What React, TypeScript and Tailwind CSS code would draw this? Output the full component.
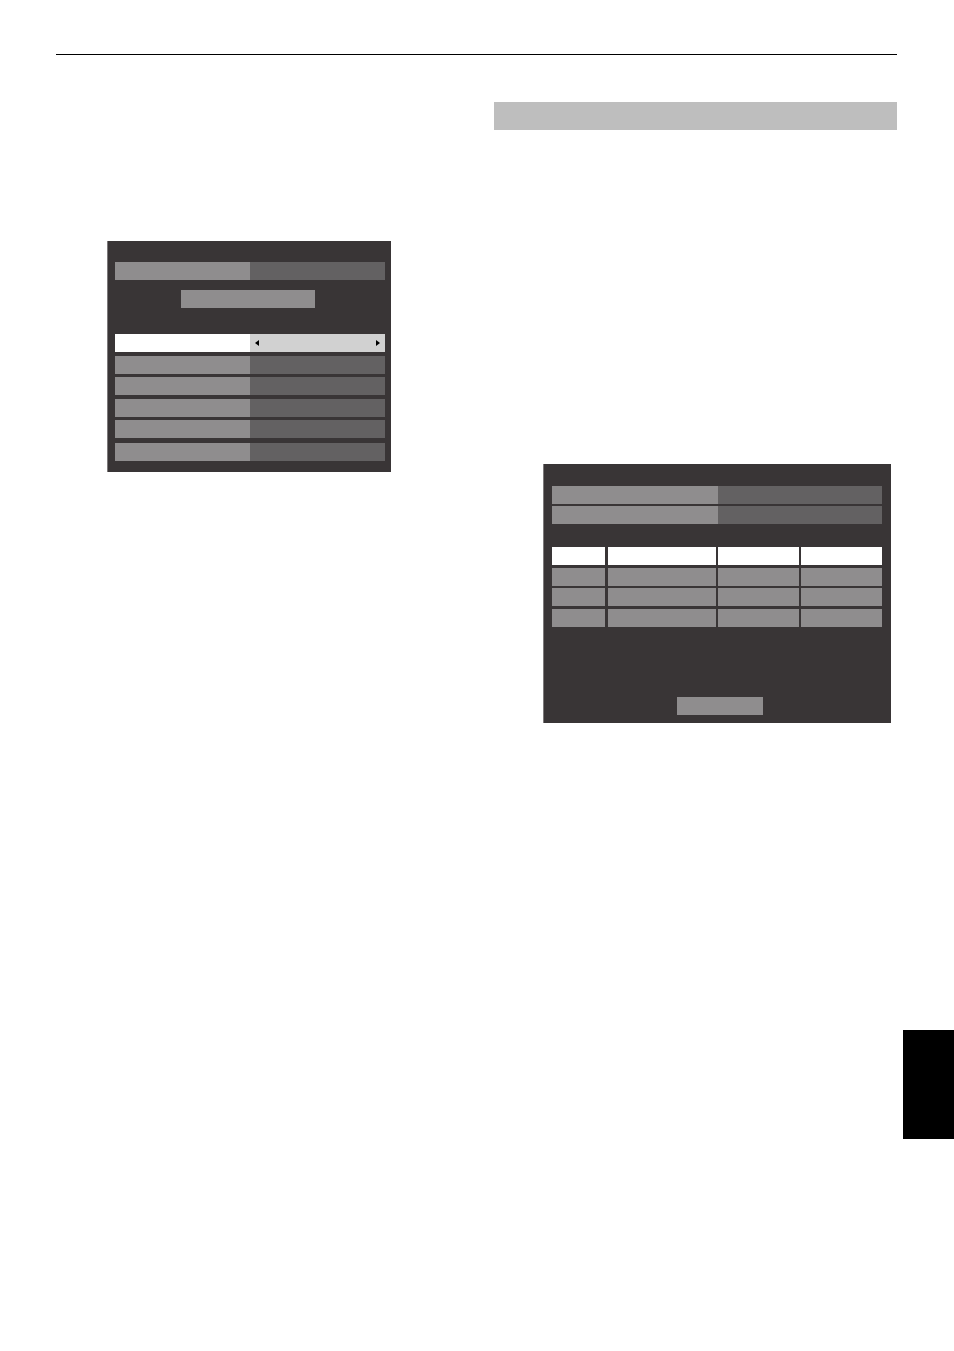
const light = 'bg-[#8f8d8e]';
const dark = 'bg-[#636162]';

function Row({ className = '' }: { className?: string }) {
  return (
    <div className={`flex h-[18px] ${className}`}>
      <div className={`w-[135px] ${light}`} />
      <div className={`w-[135px] ${dark}`} />
    </div>
  );
}

function SetupPanel() {
  return (
    <div className="ml-[51px] mt-[186px] flex h-[231px] w-[284px] flex-col border-l border-[#7d7a7b] bg-[#393536] pl-[7px] pt-[21px]">
      <Row />
      <div className={`ml-[66px] mt-[10px] h-[18px] w-[134px] ${light}`} />
      {/* selected row */}
      <div className="mt-[26px] flex h-[18px]">
        <div className="w-[135px] bg-white" />
        <div className="flex w-[135px] items-center justify-between bg-[#d1d1d1] px-[5px]">
          <span className="h-0 w-0 border-y-[3px] border-r-[4px] border-y-transparent border-r-black" />
          <span className="h-0 w-0 border-y-[3px] border-l-[4px] border-y-transparent border-l-black" />
        </div>
      </div>
      <Row className="mt-[4px]" />
      <Row className="mt-[3px]" />
      <Row className="mt-[4px]" />
      <Row className="mt-[3px]" />
      <Row className="mt-[5px]" />
    </div>
  );
}

function TableRow({ head = false, className = '' }: { head?: boolean; className?: string }) {
  const c = head ? 'bg-white' : light;
  return (
    <div className={`flex h-[18px] ${className}`}>
      <div className={`w-[53px] ${c}`} />
      <div className={`ml-[3px] w-[108px] ${c}`} />
      <div className={`ml-[2px] w-[81px] ${c}`} />
      <div className={`ml-[2px] w-[81px] ${c}`} />
    </div>
  );
}

function ResultPanel() {
  return (
    <div className="ml-[49px] mt-[334px] flex h-[259px] w-[348px] flex-col border-l border-[#7d7a7b] bg-[#393536] pl-[8px] pt-[22px]">
      <div className="flex h-[18px]">
        <div className={`w-[166px] ${light}`} />
        <div className={`w-[164px] ${dark}`} />
      </div>
      <div className="mt-[2px] flex h-[18px]">
        <div className={`w-[166px] ${light}`} />
        <div className={`w-[164px] ${dark}`} />
      </div>
      <TableRow head className="mt-[23px]" />
      <TableRow className="mt-[3px]" />
      <TableRow className="mt-[2px]" />
      <TableRow className="mt-[3px]" />
      <div className={`ml-[125px] mt-[70px] h-[18px] w-[86px] ${light}`} />
    </div>
  );
}

export default function App() {
  return (
    <div className="min-h-[1351px] w-[954px] bg-white" style={{ fontFamily: '"Liberation Sans", Arial, sans-serif' }}>
      <div className="pt-[54px]">
        <div className="ml-[56px] h-px w-[841px] bg-black" />
      </div>
      <div className="ml-[56px] flex w-[841px]">
        <div className="w-[438px]">
          <SetupPanel />
        </div>
        <div className="w-[403px]">
          <div className="mt-[47px] h-[28px] w-[403px] bg-[#bebebe]" />
          <ResultPanel />
        </div>
      </div>
      <div className="mt-[307px] flex justify-end">
        <div className="h-[109px] w-[51px] bg-black" />
      </div>
    </div>
  );
}
